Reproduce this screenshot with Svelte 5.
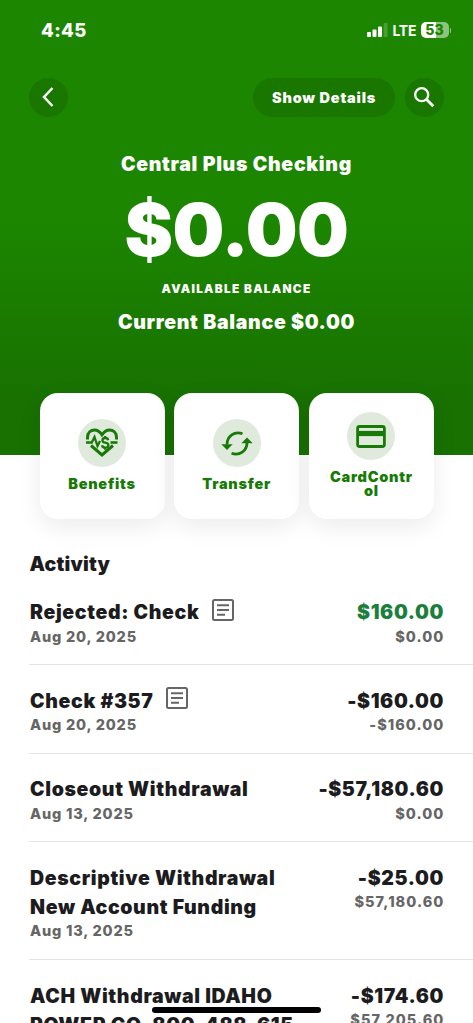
<script>
  const rows = [
    { title: ['Rejected: Check'], note: true, date: 'Aug 20, 2025', amount: '$160.00', credit: true, balance: '$0.00' },
    { title: ['Check #357'], note: true, date: 'Aug 20, 2025', amount: '-$160.00', balance: '-$160.00' },
    { title: ['Closeout Withdrawal'], date: 'Aug 13, 2025', amount: '-$57,180.60', balance: '$0.00' },
    { title: ['Descriptive Withdrawal', 'New Account Funding'], date: 'Aug 13, 2025', amount: '-$25.00', balance: '$57,180.60' },
    { title: ['ACH Withdrawal IDAHO', 'POWER CO, 800-488-615'], date: 'Aug 12, 2025', amount: '-$174.60', balance: '$57,205.60' }
  ];
</script>

<div class="screen">
  <header>
    <div class="status">
      <span class="time">4:45</span>
      <div class="indicators">
        <svg class="signal" width="21" height="14" viewBox="0 0 21 14" fill="#fff">
          <rect x="0" y="9" width="4" height="5" rx="1" />
          <rect x="5.5" y="6.6" width="4" height="7.4" rx="1" />
          <rect x="11" y="3.4" width="4" height="10.6" rx="1" />
          <rect x="16.6" y="0" width="4" height="14" rx="1" opacity=".2" />
        </svg>
        <span class="lte">LTE</span>
        <div class="battery"><span>53</span></div>
        <i class="cap"></i>
      </div>
    </div>

    <nav>
      <button class="round" aria-label="Back">
        <svg width="39" height="39" viewBox="0 0 39 39" fill="none" stroke="#fff" stroke-width="2.5"><path d="M23.500 10 15 19l8.500 9" /></svg>
      </button>
      <button class="pill">Show Details</button>
      <button class="round" aria-label="Search">
        <svg width="39" height="39" viewBox="0 0 39 39" fill="none" stroke="#fff" stroke-width="2.300"><circle cx="16.700" cy="16.700" r="6.500" /><path d="m21.300 21.300 7 7" stroke-width="2.800" /></svg>
      </button>
    </nav>

    <div class="account">
      <div class="name">Central Plus Checking</div>
      <div class="balance">$0.00</div>
      <div class="caption">AVAILABLE BALANCE</div>
      <div class="current">Current Balance $0.00</div>
    </div>
  </header>

  <section class="tiles">
    <div class="tile">
      <div class="disc">
        <svg width="48" height="48" viewBox="0 0 48 48" fill="none" stroke="#187a06" stroke-width="3">
          <path d="M9.500 20.500V18.500C9.500 13.500 13 11 16.500 11c3 0 4.700 1 7.500 4.800 2.800-3.800 4.500-4.800 7.500-4.800 3.500 0 7 2.500 7 7.500v2M13 26.500 24 36 35 26.500" />
          <path d="M8 23.500h5.800l2.700-5.500 3 9 2.500-5" stroke-width="2.300" />
          <path d="M32.500 23.500h7" stroke-width="2.600" />
          <path d="M30.200 21.200c-.3-1.600-1.400-2.200-2.900-2.200-3.800 0-3.800 4.300 0 4.700 4.200.4 4 5 0 5-1.900 0-3-.8-3.300-2.400M27.200 17v2.500M27.200 28.500v2.200" stroke-width="2.300" />
        </svg>
      </div>
      <span>Benefits</span>
    </div>
    <div class="tile">
      <div class="disc">
        <svg width="48" height="48" viewBox="0 0 48 48" fill="none" stroke="#187a06" stroke-width="2.800">
          <path d="M29.500 14.700C21.500 11.700 14 17 14 25.500M18.500 34.300C26.500 37.300 34 32 34 23.500" />
          <path d="M8.300 25.200h11.400L14 31zM28.300 24.200h11.400L34 18.500z" fill="#187a06" stroke="none" />
        </svg>
      </div>
      <span>Transfer</span>
    </div>
    <div class="tile">
      <div class="disc">
        <svg width="48" height="48" viewBox="0 0 48 48" fill="none" stroke="#187a06" stroke-width="2.800">
          <rect x="10.600" y="14.500" width="26.800" height="20" rx="2" />
          <path d="M10 21.500h28" stroke-width="5.200" />
        </svg>
      </div>
      <span>CardContr<br />ol</span>
    </div>
  </section>

  <main>
    <h2>Activity</h2>
    {#each rows as row}
      <article>
        <div class="left">
          <div class="title">
            <div>{#each row.title as line}<div>{line}</div>{/each}</div>
            {#if row.note}
              <svg width="22" height="22" viewBox="0 0 22 22" fill="none" stroke="#666" stroke-width="2">
                <rect x="1" y="1" width="20" height="20" rx="1.500" />
                <path d="M5 6.200h12M5 11h12M5 15.800h8" />
              </svg>
            {/if}
          </div>
          <div class="sub">{row.date}</div>
        </div>
        <div class="right">
          <div class="amount" class:credit={row.credit}>{row.amount}</div>
          <div class="sub">{row.balance}</div>
        </div>
      </article>
    {/each}
  </main>
  <div class="home"></div>
</div>

<style>
  :global(body) { margin: 0; background: #fff; }
  .screen { position: relative; box-sizing: border-box; width: 473px; height: 1023px; overflow: hidden; background: #fff; font-family: Inter, sans-serif; font-weight: 900; color: #1c1c1e; }
  header { height: 454.500px; background: linear-gradient(#1c8600 0, #1c8600 220px, #187100 400px, #187100 454px); color: #fff; }
  .status { display: flex; justify-content: space-between; align-items: center; height: 60px; padding: 0 22px 0 41px; }
  .time { font-size: 18.500px; font-weight: 800; letter-spacing: .4px; }
  .indicators { display: flex; align-items: center; }
  .lte { margin-left: 5px; width: 28px; font-size: 14px; font-weight: 700; letter-spacing: -.3px; }
  .battery { display: grid; place-items: center; width: 28px; height: 16px; border-radius: 5px; background: linear-gradient(90deg, #fff 54%, #8dc37f 54%); color: #1c8200; font-size: 14px; font-weight: 800; line-height: 16px; }
  .cap { width: 1.500px; height: 5px; margin-left: 1px; border-radius: 0 2px 2px 0; background: #8dc37f; }
  nav { display: flex; height: 38px; padding: 18px 29px 0 29px; }
  button { padding: 0; border: 0; color: #fff; font: inherit; background: #197700; }
  .round { width: 39px; height: 39px; border-radius: 50%; }
  .round svg { display: block; }
  .pill { width: 142px; height: 39px; margin: 0 10px 0 auto; border-radius: 20px; font-size: 14.500px; letter-spacing: .8px; }
  .account { text-align: center; white-space: nowrap; }
  .name { margin-top: 34px; font-size: 19.500px; line-height: 28px; letter-spacing: .7px; }
  .balance { margin-top: 10px; font-size: 73px; line-height: 84px; letter-spacing: -.6px; }
  .caption { margin-top: 8px; font-size: 11.800px; line-height: 18px; letter-spacing: 1.280px; }
  .current { margin-top: 11px; font-size: 19.500px; line-height: 26px; letter-spacing: .7px; }
  .tiles { position: relative; display: grid; grid-template-columns: repeat(3, 125px); gap: 9.700px; margin: -62px 0 0 39.500px; }
  .tile { display: flex; flex-direction: column; align-items: center; justify-content: center; height: 126px; border-radius: 18px; background: #fff; box-shadow: 0 8px 24px rgba(0, 0, 0, .08); }
  .disc { width: 48px; height: 48px; border-radius: 50%; background: #dfeadd; }
  .disc svg { display: block; }
  .tile span { margin-top: 9.500px; color: #187a06; font-size: 14.500px; line-height: 14.700px; letter-spacing: .75px; text-align: center; }
  h2 { margin: 30px 0 0 29.500px; font-size: 19.500px; font-weight: 900; line-height: 30px; letter-spacing: .25px; }
  article { display: flex; justify-content: space-between; box-sizing: border-box; margin-left: 29px; padding: 21.500px 29px 19px 1px; border-bottom: 1px solid #e3e3e3; }
  h2 + article { padding-top: 19.800px; }
  .title { display: flex; gap: 13px; font-size: 19.500px; line-height: 29.300px; letter-spacing: .64px; white-space: nowrap; }
  .title svg { margin-top: .5px; }
  .sub { color: #666; font-size: 14.500px; font-weight: 800; line-height: 17px; letter-spacing: .8px; margin-bottom: .7px; }
  .right { text-align: right; }
  .right .sub { letter-spacing: 1.050px; margin-right: -.4px; }
  .amount { font-size: 19.500px; line-height: 29.300px; letter-spacing: .62px; }
  .credit { color: #1b7f3b; }
  .home { position: absolute; left: 152px; top: 1007px; width: 169px; height: 6px; border-radius: 3px; background: #000; }
</style>
